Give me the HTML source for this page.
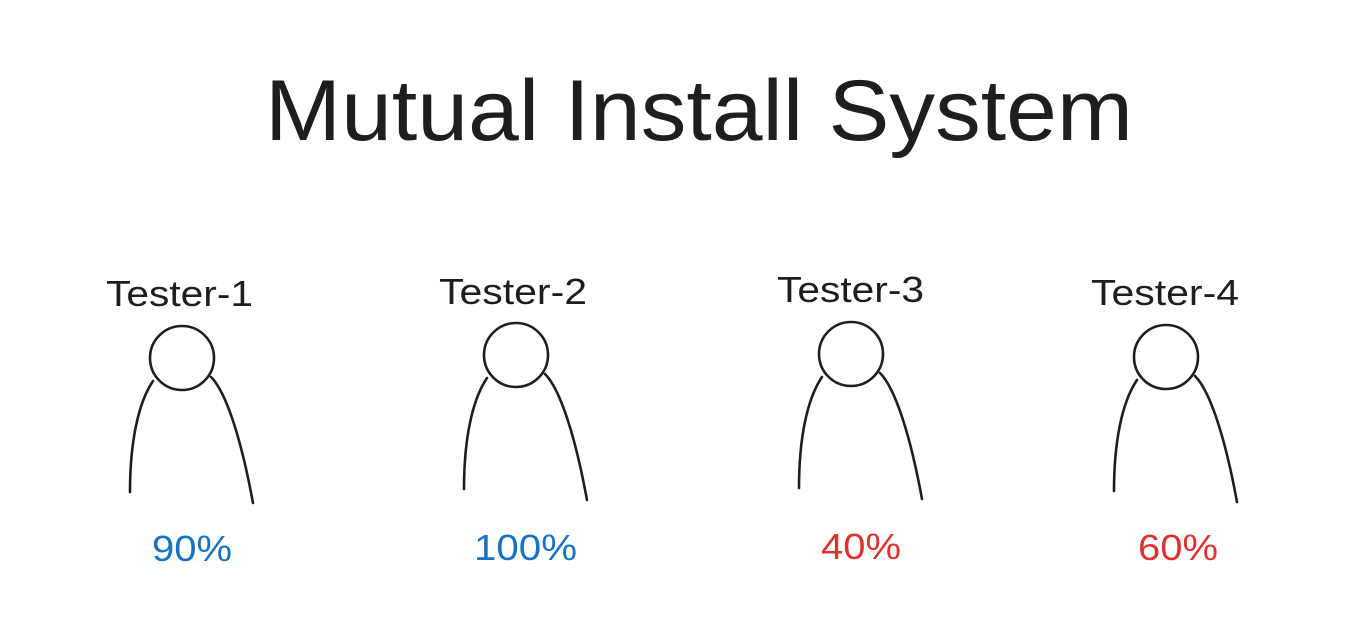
<!DOCTYPE html>
<html><head><meta charset="utf-8"><style>
html,body{margin:0;padding:0;background:#fff;width:1366px;height:634px;overflow:hidden}
svg{display:block}
text{font-family:"Liberation Sans",sans-serif}
</style></head><body>
<svg width="1366" height="634" viewBox="0 0 1366 634">
<text x="265" y="140" font-size="86" fill="#1e1e1e" textLength="868" lengthAdjust="spacingAndGlyphs">Mutual Install System</text>
<defs>
<g id="p" fill="none" stroke="#1e1e1e" stroke-width="2.6" stroke-linecap="round">
<circle cx="0" cy="0" r="32"/>
<path d="M-29,23 C-44,45 -52,85 -52,134"/>
<path d="M29,19 C45,35 60,85 71,145"/>
</g>
</defs>
<g font-size="36" fill="#1e1e1e">
<text x="106" y="306" textLength="147" lengthAdjust="spacingAndGlyphs">Tester-1</text>
<text x="439" y="304" textLength="148" lengthAdjust="spacingAndGlyphs">Tester-2</text>
<text x="777" y="302" textLength="147" lengthAdjust="spacingAndGlyphs">Tester-3</text>
<text x="1091" y="305" textLength="148" lengthAdjust="spacingAndGlyphs">Tester-4</text>
</g>
<use href="#p" x="182" y="358"/>
<use href="#p" x="516" y="355"/>
<use href="#p" x="851" y="354"/>
<use href="#p" x="1166" y="357"/>
<g font-size="36">
<text x="152" y="561" fill="#1971c2" textLength="80" lengthAdjust="spacingAndGlyphs">90%</text>
<text x="474" y="560" fill="#1971c2" textLength="103" lengthAdjust="spacingAndGlyphs">100%</text>
<text x="821" y="559" fill="#e03131" textLength="80" lengthAdjust="spacingAndGlyphs">40%</text>
<text x="1138" y="560" fill="#e03131" textLength="80" lengthAdjust="spacingAndGlyphs">60%</text>
</g>
</svg>
</body></html>
